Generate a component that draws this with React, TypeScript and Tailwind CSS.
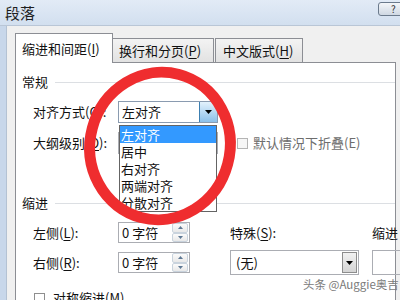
import React from "react";

const font = { fontFamily: '"Noto Sans CJK SC", "Noto Sans", sans-serif' };

function Tri() {
  return (
    <svg width="7" height="4" viewBox="0 0 7 4">
      <path d="M0 0 L7 0 L3.5 4 Z" fill="#000" />
    </svg>
  );
}

function Spinner() {
  return (
    <div className="flex flex-col w-[16px] h-[19px] mr-[1px]">
      <div className="flex-1 flex items-center justify-center bg-gradient-to-b from-[#fbfbfb] to-[#e8e8e8] border border-[#c9d3dd] rounded-[2px]">
        <svg width="5" height="3" viewBox="0 0 5 3"><path d="M0 3 L5 3 L2.5 0 Z" fill="#5d7894" /></svg>
      </div>
      <div className="flex-1 flex items-center justify-center bg-gradient-to-b from-[#fbfbfb] to-[#e8e8e8] border border-[#c9d3dd] rounded-[2px]">
        <svg width="5" height="3" viewBox="0 0 5 3"><path d="M0 0 L5 0 L2.5 3 Z" fill="#5d7894" /></svg>
      </div>
    </div>
  );
}

function U({ c }: { c: string }) {
  return <span className="underline underline-offset-2">{c}</span>;
}

export default function App() {
  return (
    <div className="relative w-[400px] h-[300px] overflow-hidden bg-[#f0f0f0] text-[#111]" style={font}>
      {/* title bar */}
      <div className="h-[26px] flex items-center bg-gradient-to-b from-[#e2ebf6] to-[#d2dfef] border-b border-[#b9c6d6]">
        <span className="pl-[5px] text-[15px] text-[#1e1e1e] leading-none">段落</span>
        <div className="ml-auto mr-[-10px] self-start mt-[2px] w-[32px] h-[14px] rounded-[3px] border border-[#6b7a8c] bg-gradient-to-b from-[#f4f6f9] to-[#cfd8e3] flex items-center pl-[12px] text-[10px] text-[#333] leading-none">
          ?
        </div>
      </div>

      <div className="flex h-[274px]">
        <div className="w-[7px] shrink-0 bg-[#c8d7ea] border-r border-[#b4c2d3]" />
        <div className="w-[8px] shrink-0" />
        <div className="flex-1 flex flex-col">
          <div className="h-[7px] shrink-0" />
          {/* tabs */}
          <div className="flex items-end h-[29px] shrink-0 text-[13px]">
            <div className="relative z-10 h-[30px] mb-[-1px] w-[98px] bg-white border border-b-0 border-[#8c8e94] flex items-center pl-[6px] whitespace-nowrap">
              缩进和间距(<U c="I" />)
            </div>
            <div className="h-[24px] w-[101px] bg-gradient-to-b from-[#f3f3f3] to-[#e2e2e2] border border-l-0 border-b-0 border-[#8c8e94] flex items-center pl-[6px] whitespace-nowrap">
              换行和分页(<U c="P" />)
            </div>
            <div className="h-[24px] w-[88px] ml-[1px] bg-gradient-to-b from-[#f3f3f3] to-[#e2e2e2] border border-b-0 border-[#8c8e94] flex items-center pl-[7px] whitespace-nowrap">
              中文版式(<U c="H" />)
            </div>
          </div>

          {/* panel */}
          <div className="relative w-[381px] h-[300px] shrink-0 bg-white border-t border-l border-r border-[#8c8e94] text-[13px] flex flex-col">
            <div className="h-[11px] shrink-0" />
            <div className="h-[16px] shrink-0 flex items-center pl-[6px]">
              <span>常规</span>
              <div className="flex-1 ml-[7px] h-px bg-[#dcdfe3]" />
            </div>
            <div className="h-[11px] shrink-0" />

            {/* row 1 */}
            <div className="h-[22px] shrink-0 flex items-center">
              <div className="w-[102px] shrink-0 pl-[17px] whitespace-nowrap">对齐方式(<U c="G" />):</div>
              <div className="w-[100px] h-[22px] border border-[#8a9bb0] flex items-center bg-white">
                <span className="flex-1 pl-[3px]">左对齐</span>
                <div className="w-[18px] h-[20px] border-l border-[#3c7fb1] bg-gradient-to-b from-[#e3f2fc] to-[#8cc0e9] flex items-center justify-center">
                  <Tri />
                </div>
              </div>
            </div>
            <div className="h-[9px] shrink-0" />

            {/* row 2 */}
            <div className="h-[22px] shrink-0 flex items-center">
              <div className="w-[102px] shrink-0 pl-[17px] whitespace-nowrap">大纲级别(<U c="O" />):</div>
              <div className="w-[100px] h-[22px] shrink-0 border border-[#abadb3]" />
              <div className="ml-[19px] shrink-0 w-[11px] h-[11px] border border-[#b4b4b4] bg-[#f6f6f6]" />
              <span className="ml-[5px] text-[#6d6d6d] whitespace-nowrap">默认情况下折叠(E)</span>
            </div>
            <div className="h-[41px] shrink-0" />

            <div className="h-[16px] shrink-0 flex items-center pl-[6px]">
              <span>缩进</span>
              <div className="flex-1 ml-[7px] h-px bg-[#dcdfe3]" />
            </div>
            <div className="h-[11px] shrink-0" />

            {/* row A */}
            <div className="h-[21px] shrink-0 flex items-center">
              <div className="w-[102px] shrink-0 pl-[17px] whitespace-nowrap">左侧(<U c="L" />):</div>
              <div className="w-[72px] shrink-0 h-[21px] border border-[#abadb3] flex items-center">
                <span className="flex-1 pl-[3px] whitespace-nowrap">0 字符</span>
                <Spinner />
              </div>
              <div className="ml-[40px] shrink-0 w-[142px] whitespace-nowrap">特殊(<U c="S" />):</div>
              <div className="whitespace-nowrap shrink-0">缩进</div>
            </div>
            <div className="h-[9px] shrink-0" />

            {/* row B */}
            <div className="h-[21px] shrink-0 flex items-center">
              <div className="w-[102px] shrink-0 pl-[17px] whitespace-nowrap">右侧(<U c="R" />):</div>
              <div className="w-[72px] shrink-0 h-[21px] border border-[#abadb3] flex items-center">
                <span className="flex-1 pl-[3px] whitespace-nowrap">0 字符</span>
                <Spinner />
              </div>
              <div className="ml-[40px] shrink-0 w-[129px] h-[25px] border border-[#abadb3] flex items-center">
                <span className="flex-1 pl-[5px]">(无)</span>
                <div className="w-[15px] h-[21px] mr-[1px] border border-[#8d8d8d] bg-gradient-to-b from-[#f2f2f2] to-[#d4d4d4] flex items-center justify-center">
                  <Tri />
                </div>
              </div>
              <div className="ml-[13px] shrink-0 w-[40px] h-[25px] border border-[#abadb3]" />
            </div>
            <div className="h-[17px] shrink-0" />

            {/* row C */}
            <div className="h-[16px] shrink-0 flex items-center pl-[18px]">
              <div className="w-[11px] h-[11px] shrink-0 border border-[#8f8f8f]" />
              <span className="ml-[8px] whitespace-nowrap">对称缩进(M)</span>
            </div>

            {/* dropdown list */}
            <div className="absolute left-[103px] top-[62px] w-[98px] h-[87px] bg-white border border-[#646464] flex flex-col z-20">
              <div className="h-[17px] flex items-center pl-[1px] bg-[#3399ff] text-white">左对齐</div>
              <div className="h-[17px] flex items-center pl-[1px]">居中</div>
              <div className="h-[17px] flex items-center pl-[1px]">右对齐</div>
              <div className="h-[17px] flex items-center pl-[1px]">两端对齐</div>
              <div className="h-[17px] flex items-center pl-[1px]">分散对齐</div>
            </div>
          </div>
        </div>
      </div>

      {/* red circle annotation */}
      <svg className="absolute left-0 top-0 pointer-events-none z-30" width="400" height="300">
        <ellipse cx="160" cy="146" rx="70" ry="74" fill="none" stroke="#ef2d2f" strokeWidth="11" transform="rotate(15 160 146)" />
      </svg>

      {/* watermark */}
      <div className="absolute left-[303px] top-[276px] text-[11.5px] leading-[16px] text-[#7a7a7a] whitespace-nowrap z-30">头条 @Auggie奥吉</div>
    </div>
  );
}
